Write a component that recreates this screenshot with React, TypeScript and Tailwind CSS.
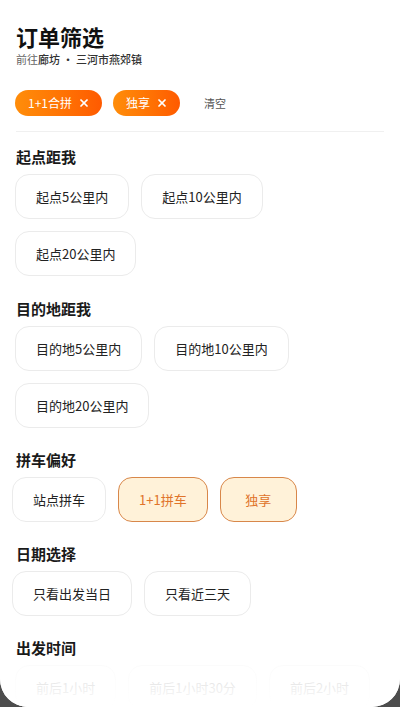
import { X } from 'lucide-react';

const font = { fontFamily: '"Noto Sans CJK SC", "Noto Sans", sans-serif' };

type Opt = { label: string; selected?: boolean; minW?: string };

const Pill = ({ label, selected, minW }: Opt) => {
  return (
    <div
      className={
        'flex h-[45px] items-center justify-center rounded-[14px] px-5 text-[13px] ' +
        (minW ?? '') +
        (selected
          ? ' border border-[#d8874a] bg-[#fff2d9] text-[#e0742a]'
          : ' border border-[#ebebeb] bg-white text-[#222]')
      }
    >
      {label}
    </div>
  );
};

const Section = ({
  title,
  options,
  shift,
  tight,
}: {
  title: string;
  options: Opt[];
  shift?: boolean;
  tight?: boolean;
}) => {
  return (
    <div className={tight ? 'mt-[21px]' : 'mt-[22px]'}>
      <div className="h-[22px] text-[15px] font-bold leading-[22px] text-[#1a1a1a]">{title}</div>
      <div className={'mt-[6px] flex flex-wrap gap-x-3 gap-y-3 ' + (shift ? '-ml-1' : '-ml-px')}>
        {options.map((o) => (
          <Pill key={o.label} {...o} />
        ))}
      </div>
    </div>
  );
};

const Chip = ({ label }: { label: string }) => {
  return (
    <div className="flex h-[26px] items-center gap-[6px] rounded-full bg-gradient-to-r from-[#ff8d0a] to-[#ff5a00] pl-[13px] pr-[12px] text-[12px] text-white">
      <span>{label}</span>
      <X size={12} strokeWidth={3.5} />
    </div>
  );
};

export default function App() {
  return (
    <div className="h-[707px] w-full bg-[#4d4d4d]" style={font}>
      <div className="relative h-full overflow-hidden rounded-b-[28px] bg-white px-4">
        <div className="pt-[21px] text-[22px] font-bold leading-[30px] text-[#111]">订单筛选</div>
        <div className="text-[11px] leading-[16px] text-[#666]">
          前往<span className="font-medium text-[#333]">廊坊 · 三河市燕郊镇</span>
        </div>

        <div className="mt-[23px] flex items-center -ml-px">
          <Chip label="1+1合拼" />
          <div className="ml-[11px]">
            <Chip label="独享" />
          </div>
          <span className="ml-6 text-[11px] text-[#555]">清空</span>
        </div>

        <div className="mt-[15px] h-px w-full bg-[#f0f0f0]" />

        <div className="-mt-[8px]">
          <Section
            title="起点距我"
            options={[{ label: '起点5公里内' }, { label: '起点10公里内' }, { label: '起点20公里内' }]}
          />
          <Section
            title="目的地距我"
            options={[{ label: '目的地5公里内' }, { label: '目的地10公里内' }, { label: '目的地20公里内' }]}
          />
          <Section
            title="拼车偏好"
            shift
            tight
            options={[
              { label: '站点拼车' },
              { label: '1+1拼车', selected: true },
              { label: '独享', selected: true, minW: 'min-w-[77px]' },
            ]}
          />
          <Section
            title="日期选择"
            shift
            tight
            options={[{ label: '只看出发当日' }, { label: '只看近三天' }]}
          />
          <Section
            title="出发时间"
            tight
            options={[{ label: '前后1小时' }, { label: '前后1小时30分' }, { label: '前后2小时' }]}
          />
        </div>

        <div className="pointer-events-none absolute bottom-0 left-0 h-[46px] w-full bg-gradient-to-b from-white/80 to-white" />
      </div>
    </div>
  );
}
